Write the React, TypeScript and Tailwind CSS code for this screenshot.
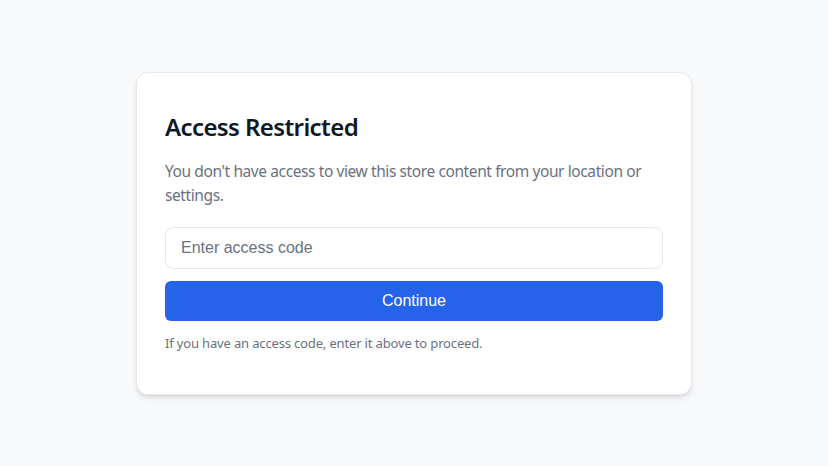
import React, { useState } from "react";

export default function App() {
  const [code, setCode] = useState("");

  return (
    <div className="min-h-[466px] w-full bg-[#f8f9fb] flex items-center justify-center font-['Segoe_UI','Noto_Sans',sans-serif]">
      <div className="w-[556px] bg-white border border-gray-200 rounded-xl shadow-md px-[28px] pt-[38px] pb-[41px]">
        <h1 className="text-2xl leading-8 font-semibold tracking-[-0.025em] text-gray-900">Access Restricted</h1>
        <p className="mt-4 text-[15.5px] leading-6 tracking-[-0.026em] text-gray-500">
          You don't have access to view this store content from your location or settings.
        </p>

        {/* Access code form */}
        <form
          onSubmit={(e) => e.preventDefault()}
          className="mt-5 flex flex-col gap-3 font-['Liberation_Sans',Arial,sans-serif]"
        >
          <input
            type="text"
            value={code}
            onChange={(e) => setCode(e.target.value)}
            placeholder="Enter access code"
            className="h-[42px] w-full rounded-lg border border-gray-200 px-[15px] text-base text-gray-800 placeholder-gray-500 focus:outline-none"
          />
          <button
            type="submit"
            className="h-10 w-full rounded-md bg-[#2563eb] text-base text-white"
          >
            Continue
          </button>
        </form>

        <p className="mt-3 text-[13px] leading-5 tracking-[-0.012em] text-gray-500">
          If you have an access code, enter it above to proceed.
        </p>
      </div>
    </div>
  );
}
